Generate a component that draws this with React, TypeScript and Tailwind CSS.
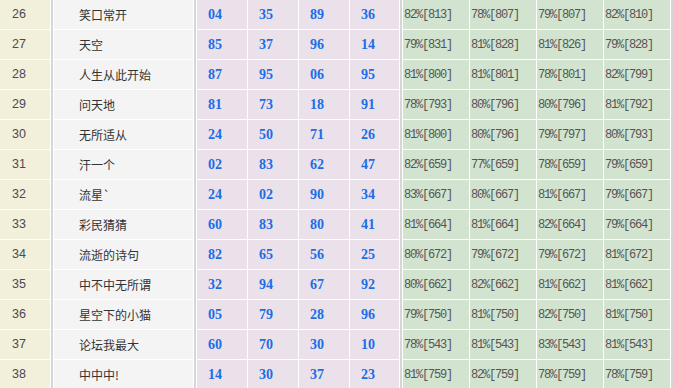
import React from 'react';

type Row = [string, string, string[], string[]];

const rows: Row[] = [
  ['26', '笑口常开', ['04', '35', '89', '36'], ['82%[813]', '78%[807]', '79%[807]', '82%[810]']],
  ['27', '天空', ['85', '37', '96', '14'], ['79%[831]', '81%[828]', '81%[826]', '79%[828]']],
  ['28', '人生从此开始', ['87', '95', '06', '95'], ['81%[800]', '81%[801]', '78%[801]', '82%[799]']],
  ['29', '问天地', ['81', '73', '18', '91'], ['78%[793]', '80%[796]', '80%[796]', '81%[792]']],
  ['30', '无所适从', ['24', '50', '71', '26'], ['81%[800]', '80%[796]', '79%[797]', '80%[793]']],
  ['31', '汗一个', ['02', '83', '62', '47'], ['82%[659]', '77%[659]', '78%[659]', '79%[659]']],
  ['32', '流星`', ['24', '02', '90', '34'], ['83%[667]', '80%[667]', '81%[667]', '79%[667]']],
  ['33', '彩民猜猜', ['60', '83', '80', '41'], ['81%[664]', '81%[664]', '82%[664]', '79%[664]']],
  ['34', '流逝的诗句', ['82', '65', '56', '25'], ['80%[672]', '79%[672]', '79%[672]', '81%[672]']],
  ['35', '中不中无所谓', ['32', '94', '67', '92'], ['80%[662]', '82%[662]', '81%[662]', '81%[662]']],
  ['36', '星空下的小猫', ['05', '79', '28', '96'], ['79%[750]', '81%[750]', '82%[750]', '81%[750]']],
  ['37', '论坛我最大', ['60', '70', '30', '10'], ['78%[543]', '81%[543]', '83%[543]', '81%[543]']],
  ['38', '中中中!', ['14', '30', '37', '23'], ['81%[759]', '82%[759]', '78%[759]', '78%[759]']],
];

const Sep = () => <div className="w-[2px] self-stretch bg-[#d6d6d6]" />;

const App: React.FC = () => {
  return (
    <div className="w-[673px] h-[388px] overflow-hidden bg-white">
      {rows.map(([no, name, nums, rates]) => (
        <div key={no} className="flex h-[30px] gap-px bg-white items-start">
          {/* rank */}
          <div className="w-[50px] h-[29px] flex items-center pl-[12px] bg-[#f2f0db] text-[12.5px] text-[#4a4a55] font-['Liberation_Sans',sans-serif]">
            {no}
          </div>
          <Sep />
          {/* name */}
          <div className="w-[139px] h-[29px] flex items-center pl-[25px] bg-[#f4f4f4] text-[12px] text-[#333] font-['Noto_Sans_CJK_SC',sans-serif]">
            {name}
          </div>
          <Sep />
          {/* picks */}
          {nums.map((n, i) => (
            <div
              key={i}
              className={`${i === 3 ? 'w-[49px]' : 'w-[50px]'} h-[29px] flex items-center pl-[11px] bg-[#ebe1ea] text-[14px] font-bold text-[#1a6ee6] font-['Liberation_Serif',serif]`}
            >
              {n}
            </div>
          ))}
          <Sep />
          {/* rates */}
          {rates.map((r, i) => (
            <div
              key={i}
              className="w-[66px] h-[29px] flex items-center pl-px bg-[#d2e3cf] text-[12px] tracking-[-1.2px] text-[#555] font-['Liberation_Mono',monospace]"
            >
              {r}
            </div>
          ))}
          <Sep />
        </div>
      ))}
    </div>
  );
};

export default App;
